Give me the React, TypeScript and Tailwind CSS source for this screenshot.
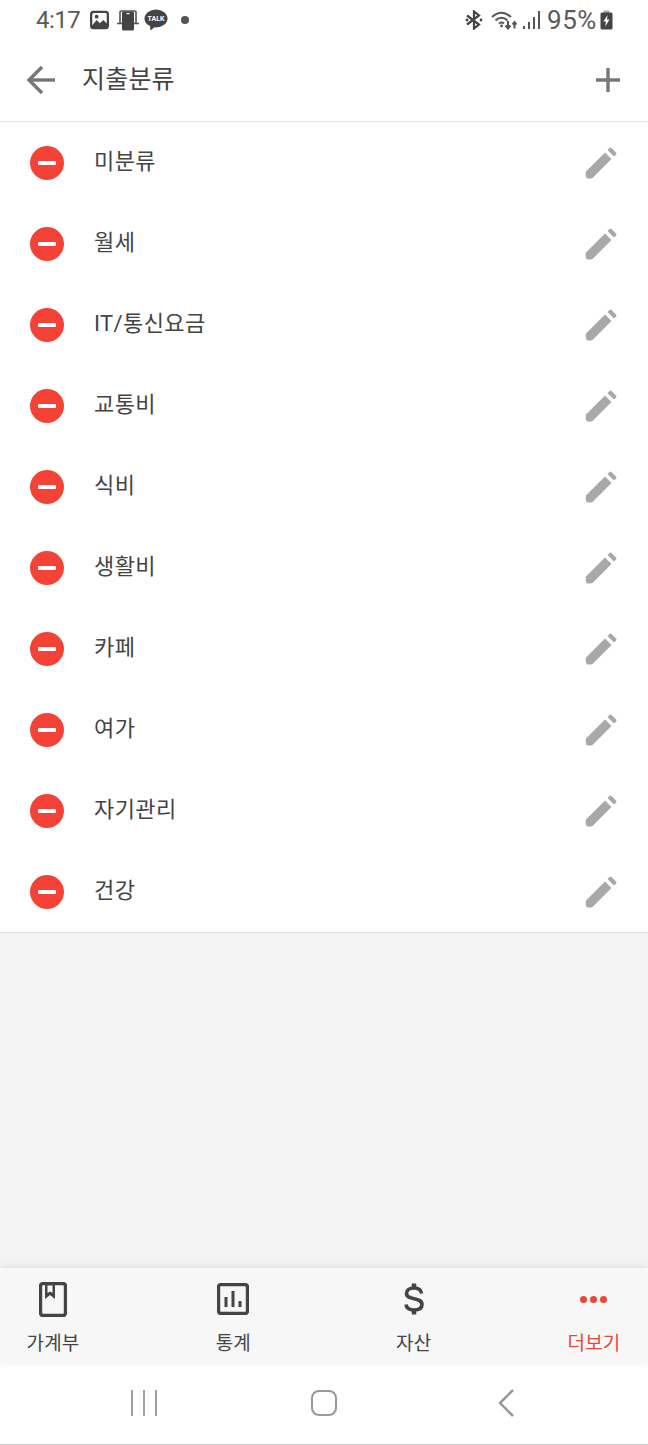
import React from 'react';

const FONT = "font-['Roboto','Noto_Sans_CJK_KR',sans-serif]";

const CATEGORIES = ['미분류', '월세', 'IT/통신요금', '교통비', '식비', '생활비', '카페', '여가', '자기관리', '건강'];

const StatusBar: React.FC = () => (
  <div className="h-[40px] flex items-center justify-between pl-[36px] pr-[35px] text-[#5a5a5a]">
    <div className="flex items-center">
      <span className="text-[24px] leading-none tracking-[-0.5px] w-[44px]">4:17</span>
      <svg className="ml-[10px]" width="19" height="20" viewBox="0 0 20 20">
        <rect x="1.2" y="1.5" width="17.6" height="17" rx="2.5" fill="none" stroke="#444" strokeWidth="2.4" />
        <path d="M2 16 L7 10 L10.5 13.5 L14 10 L18 14 V18 H2 Z" fill="#444" />
        <circle cx="7" cy="6.5" r="2" fill="#444" />
      </svg>
      <svg className="ml-[8px]" width="22" height="21" viewBox="0 0 22 21">
        <path d="M3 13 V2 Q3 1 4 1 H18 Q19 1 19 2 V13" fill="none" stroke="#555" strokeWidth="1.6" />
        <path d="M0 13.5 H22" stroke="#555" strokeWidth="1.6" />
        <rect x="5" y="1.5" width="12" height="19" rx="1.5" fill="#444" />
        <rect x="9.5" y="3" width="3" height="1.2" fill="#fff" />
      </svg>
      <svg className="ml-[5px]" width="24" height="22" viewBox="0 0 24 22">
        <ellipse cx="12" cy="9.5" rx="11.5" ry="9" fill="#444" />
        <path d="M6 16 L6.5 21.5 L12 17 Z" fill="#444" />
        <text x="12" y="12" textAnchor="middle" fontSize="7" fontWeight="700" fill="#fff" fontFamily="Roboto, sans-serif">TALK</text>
      </svg>
      <span className="ml-[13px] w-[8px] h-[8px] rounded-full bg-[#555]" />
    </div>
    <div className="flex items-center">
      <svg width="18" height="20" viewBox="0 0 18 20" fill="none" stroke="#444" strokeWidth="2.2">
        <path d="M2 5.5 L14 14.5 L9 18.5 V1.5 L14 5.5 L2 14.5" />
        <circle cx="2" cy="10" r="1.4" fill="#444" stroke="none" />
        <circle cx="16" cy="10" r="1.4" fill="#444" stroke="none" />
      </svg>
      <svg className="ml-[8px]" width="27" height="20" viewBox="0 0 27 20" fill="none" stroke="#555" strokeWidth="2">
        <path d="M1 7 Q10.5 -1.5 20 7" />
        <path d="M4.5 10.5 Q10.5 5 16.5 10.5" />
        <path d="M8 13.5 Q10.5 11.5 13 13.5" />
        <circle cx="10.5" cy="16" r="1.4" fill="#555" stroke="none" />
        <path d="M17 11 V18 M14.5 15.5 L17 18.5 L19.5 15.5" />
        <path d="M23.5 18.5 V12 M21.5 14.5 L23.5 12 L25.5 14.5" />
      </svg>
      <div className="ml-[5px] flex items-end gap-[3px] h-[18px]">
        <span className="w-[2px] h-[3px] bg-[#555]" />
        <span className="w-[2px] h-[7px] bg-[#555]" />
        <span className="w-[2px] h-[12px] bg-[#555]" />
        <span className="w-[2px] h-[18px] bg-[#555]" />
      </div>
      <span className="ml-[7px] text-[26px] leading-none tracking-[0.6px]">95%</span>
      <svg className="ml-[3px]" width="13" height="20" viewBox="0 0 13 20">
        <rect x="3.5" y="0.5" width="6" height="3" fill="#aaa" />
        <rect x="0.5" y="2.5" width="12" height="17" rx="1.5" fill="#444" />
        <path d="M7.5 5 L3.5 11.5 H6 L5.2 16.5 L9.5 9.5 H7 Z" fill="#fff" />
      </svg>
    </div>
  </div>
);

const Header: React.FC = () => (
  <div className="h-[82px] shrink-0 border-b border-[#e0e0e0] flex items-start">
    <div className="h-[81px] w-full flex items-center pl-[26px] pr-[27px] pb-[2px]">
      <svg width="30" height="30" viewBox="0 0 30 30" fill="none" stroke="#777" strokeWidth="3.4">
        <path d="M29 15 H3" />
        <path d="M16 2 L3 15 L16 28" />
      </svg>
      <span className="ml-[26px] text-[25px] leading-none tracking-[0.2px] text-[#444] flex-1">지출분류</span>
      <svg width="26" height="26" viewBox="0 0 26 26" fill="none" stroke="#777" strokeWidth="3.4">
        <path d="M13 1 V25 M1 13 H25" />
      </svg>
    </div>
  </div>
);

const CategoryRow: React.FC<{ name: string }> = ({ name }) => (
  <div className="h-[81px] flex items-center pl-[30px] pr-[31px]">
    <div className="w-[34px] h-[34px] rounded-full bg-[#f44336] flex items-center justify-center">
      <span className="w-[18px] h-[4px] bg-white rounded-[1px]" />
    </div>
    <span className="ml-[30px] pb-[1px] flex-1 text-[22px] leading-none tracking-[0.4px] text-[#444]">{name}</span>
    <svg width="32" height="32" viewBox="0 0 32 32" fill="#a8a8a8">
      <path d="M1 24.5 L20 5.5 L26.5 12 L7.5 31 Q4 32 1.5 31 Q0 28 1 24.5 Z" />
      <path d="M22.5 3 L24.5 1 Q25.5 0 26.5 1 L31 5.5 Q32 6.5 31 7.5 L29 9.5 Z" />
    </svg>
  </div>
);

const TabItem: React.FC<{ label: string; active?: boolean; icon: React.ReactNode }> = ({ label, active, icon }) => (
  <div className="w-[90px] h-full flex flex-col items-center">
    <div className="h-[62px] flex items-center justify-center">{icon}</div>
    <span className={`text-[19px] leading-none mt-[4px] tracking-[0.2px] ${active ? 'text-[#e8473a]' : 'text-[#444]'}`}>{label}</span>
  </div>
);

const BottomTabs: React.FC = () => (
  <div className="h-[96px] shrink-0 bg-[#f7f7f7] shadow-[0_-2px_8px_rgba(0,0,0,0.08)] relative flex justify-between pl-[8px] pr-[9px]">
    <TabItem
      label="가계부"
      icon={
        <svg width="28" height="35" viewBox="0 0 28 35" fill="none">
          <rect x="1.5" y="1.5" width="25" height="32" rx="2.5" stroke="#444" strokeWidth="3.4" />
          <path d="M6 2 H16 V17 L11 13 L6 17 Z" fill="#444" />
          <path d="M8.5 3.5 H13.5 V11 L11 9.5 L8.5 11 Z" fill="#f7f7f7" />
        </svg>
      }
    />
    <TabItem
      label="통계"
      icon={
        <svg width="32" height="32" viewBox="0 0 32 32" fill="none">
          <rect x="1.5" y="1.5" width="29" height="29" rx="2.5" stroke="#444" strokeWidth="3.4" />
          <rect x="7.5" y="14" width="3" height="10" fill="#444" />
          <rect x="14.5" y="8" width="3" height="16" fill="#444" />
          <rect x="21.5" y="18" width="3" height="6" fill="#444" />
        </svg>
      }
    />
    <TabItem
      label="자산"
      icon={
        <svg width="20" height="32" viewBox="0 0 20 32" fill="none" stroke="#444" strokeWidth="3.6">
          <path d="M17.5 10.5 C17 6.5 14 5 10 5 C5.5 5 2.5 7 2.5 10.5 C2.5 18 18 13.5 18 21.5 C18 25 15 27 10 27 C5.5 27 2.5 25 2 21.5" />
          <path d="M10 0.5 V5 M10 27 V31.5" strokeWidth="4.5" />
        </svg>
      }
    />
    <TabItem
      label="더보기"
      active
      icon={
        <div className="flex gap-[3px]">
          <span className="w-[7px] h-[7px] rounded-full bg-[#e8473a]" />
          <span className="w-[7px] h-[7px] rounded-full bg-[#e8473a]" />
          <span className="w-[7px] h-[7px] rounded-full bg-[#e8473a]" />
        </div>
      }
    />
  </div>
);

const NavBar: React.FC = () => (
  <div className="h-[81px] shrink-0 bg-white border-b border-[#cccccc] flex items-center pb-[2px]">
    <div className="w-full flex items-center pl-[131px]">
      <div className="flex gap-[10px]">
        <span className="w-[2px] h-[26px] bg-[#a0a0a0]" />
        <span className="w-[2px] h-[26px] bg-[#a0a0a0]" />
        <span className="w-[2px] h-[26px] bg-[#a0a0a0]" />
      </div>
      <div className="ml-[154px] w-[26px] h-[26px] rounded-[8px] border-[2.5px] border-[#999]" />
      <svg className="ml-[161px]" width="16" height="28" viewBox="0 0 16 28" fill="none" stroke="#999" strokeWidth="2.5">
        <path d="M15 1 L2 14 L15 27" />
      </svg>
    </div>
  </div>
);

const App: React.FC = () => {
  return (
    <div className={`w-[648px] h-[1445px] flex flex-col bg-white overflow-hidden ${FONT}`}>
      <StatusBar />
      <Header />
      <div className="shrink-0 border-b border-[#e0e0e0]">
        {CATEGORIES.map((name) => (
          <CategoryRow key={name} name={name} />
        ))}
      </div>
      <div className="flex-1 bg-[#f4f4f4]" />
      <BottomTabs />
      <NavBar />
    </div>
  );
};

export default App;
